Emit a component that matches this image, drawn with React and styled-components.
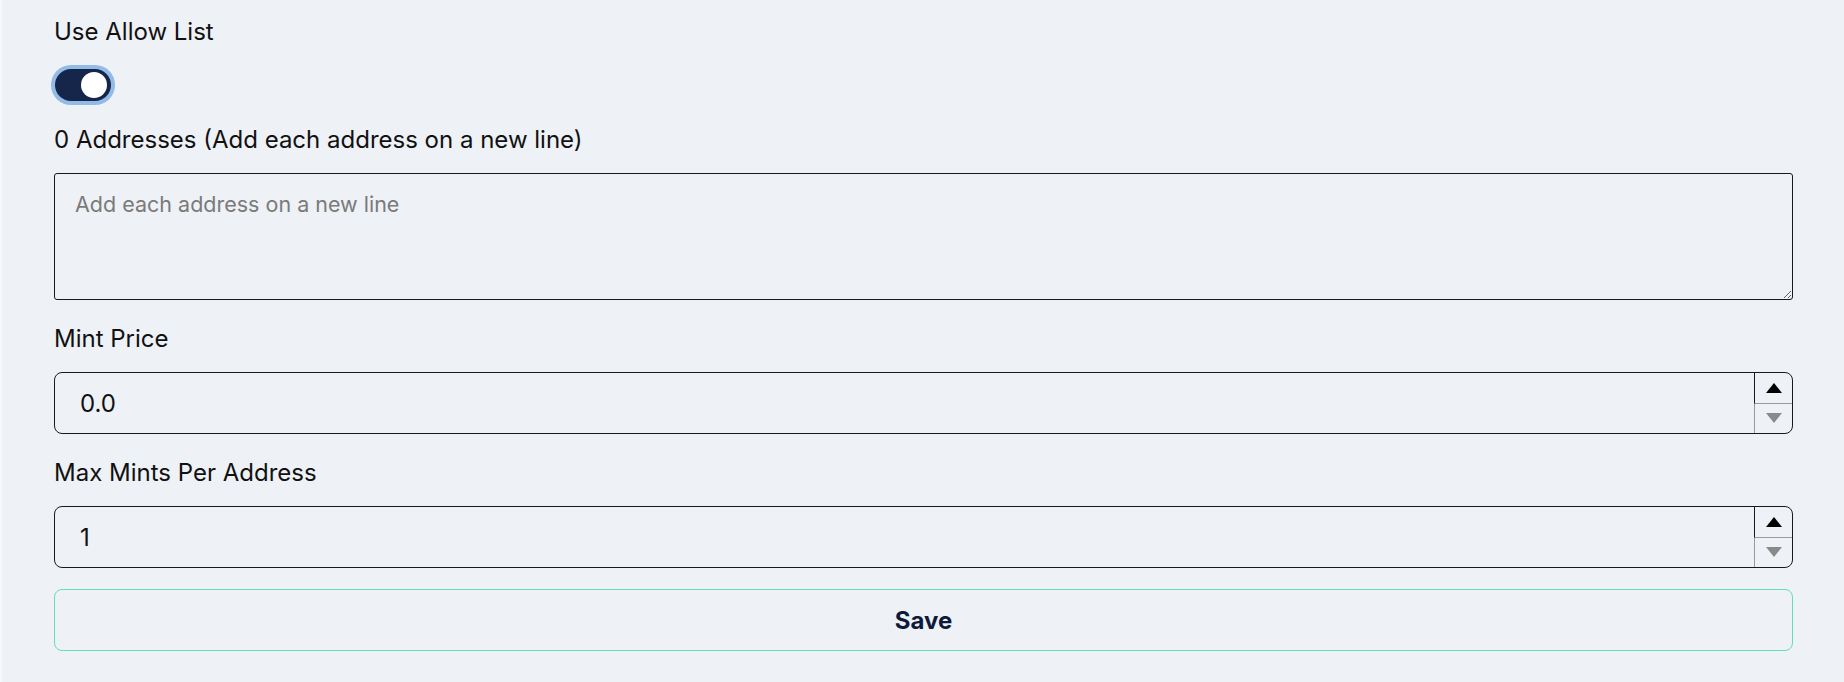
import styled, { createGlobalStyle } from 'styled-components';

const FONT = 'Inter, Lato, "Liberation Sans", sans-serif';

const GlobalStyle = createGlobalStyle`
  html, body {
    margin: 0;
    padding: 0;
    background: #eef1f6;
  }
  * {
    box-sizing: border-box;
  }
`;

const Page = styled.div`
  min-height: 100vh;
  background: #eef1f6;
  border-left: 2px solid #f7f8fa;
  padding: 17px 51px 30px 52px;
  font-family: ${FONT};
  color: #111;
`;

const Form = styled.form`
  display: flex;
  flex-direction: column;
  gap: 24px;
`;

const Field = styled.div`
  display: flex;
  flex-direction: column;
  gap: 18px;
`;

const Label = styled.label`
  font-size: 24px;
  line-height: 30px;
  color: #111;
`;

const ToggleRow = styled.div`
  padding-top: 4px;
  padding-left: 1px;
`;

const Track = styled.button`
  width: 56px;
  height: 32px;
  border: none;
  border-radius: 16px;
  background: ${({ $on }) => ($on ? '#16254a' : '#c5cbd6')};
  box-shadow: 0 0 0 4px #92bbe7;
  cursor: pointer;
  display: flex;
  align-items: center;
  justify-content: ${({ $on }) => ($on ? 'flex-end' : 'flex-start')};
  padding: 0 4px;
`;

const Knob = styled.span`
  width: 26px;
  height: 26px;
  border-radius: 50%;
  background: #fff;
`;

const TextArea = styled.textarea`
  height: 127px;
  width: 100%;
  padding: 17px 20px 14px;
  border: 1px solid #1a1a1a;
  border-radius: 3px;
  background: transparent;
  font-family: ${FONT};
  font-size: 21.5px;
  color: #111;
  resize: vertical;
  outline: none;

  &::placeholder {
    color: #7a7a7a;
  }
`;

const NumberBox = styled.div`
  display: flex;
  height: 62px;
  border: 1px solid #1a1a1a;
  border-radius: 8px;
  overflow: hidden;
`;

const NumberInput = styled.input`
  flex: 1;
  min-width: 0;
  border: none;
  background: transparent;
  padding: 0 25px;
  font-family: ${FONT};
  font-size: 24px;
  color: #111;
  outline: none;
`;

const Spinner = styled.div`
  width: 38px;
  display: flex;
  flex-direction: column;
`;

const SpinButton = styled.div`
  flex: 1;
  display: flex;
  align-items: center;
  justify-content: center;
  border-left: 1px solid ${({ $up }) => ($up ? '#1a1a1a' : '#9a9a9a')};
  border-bottom: ${({ $up }) => ($up ? '1px solid #9a9a9a' : 'none')};
`;

const Arrow = styled.span`
  width: 0;
  height: 0;
  border-left: 8px solid transparent;
  border-right: 8px solid transparent;
  ${({ $up }) =>
    $up
      ? 'border-bottom: 10px solid #000;'
      : 'border-top: 10px solid #8a8a8a;'}
`;

const SaveButton = styled.button`
  margin-top: -3px;
  height: 62px;
  width: 100%;
  border: 1px solid #62dfb9;
  border-radius: 8px;
  background: transparent;
  font-family: ${FONT};
  font-weight: 700;
  font-size: 24px;
  color: #0e1a3a;
  cursor: pointer;
`;

function NumberField({ label, value }) {
  return (
    <Field>
      <Label>{label}</Label>
      <NumberBox>
        <NumberInput type="text" defaultValue={value} />
        <Spinner>
          <SpinButton $up>
            <Arrow $up />
          </SpinButton>
          <SpinButton>
            <Arrow />
          </SpinButton>
        </Spinner>
      </NumberBox>
    </Field>
  );
}

export default function App() {
  return (
    <>
      <GlobalStyle />
      <Page>
        <Form onSubmit={(e) => e.preventDefault()}>
          <Field>
            <Label>Use Allow List</Label>
            <ToggleRow>
              <Track type="button" $on>
                <Knob />
              </Track>
            </ToggleRow>
          </Field>
          <Field>
            <Label>0 Addresses (Add each address on a new line)</Label>
            <TextArea placeholder="Add each address on a new line" />
          </Field>
          <NumberField label="Mint Price" value="0.0" />
          <NumberField label="Max Mints Per Address" value="1" />
          <SaveButton type="submit">Save</SaveButton>
        </Form>
      </Page>
    </>
  );
}
